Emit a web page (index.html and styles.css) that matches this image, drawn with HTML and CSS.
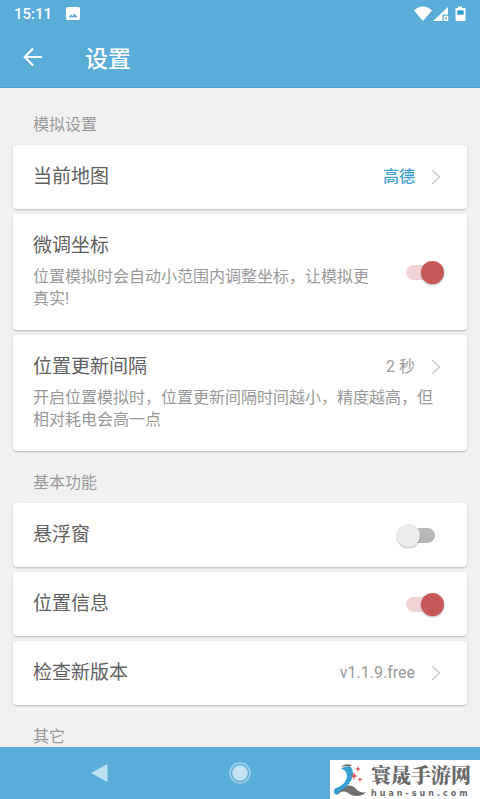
FILE: index.html
```html
<!DOCTYPE html>
<html lang="zh-CN">
<head>
<meta charset="utf-8">
<meta name="viewport" content="width=device-width, initial-scale=1">
<title>设置</title>
<link rel="stylesheet" href="styles.css">
</head>
<body>
<header class="top">
  <div class="status">
    <span class="clock">15:11</span>
    <svg class="photo" width="14" height="13" viewBox="0 0 14 13" aria-hidden="true"><path fill="#fff" fill-rule="evenodd" d="M1.500 0h11A1.500 1.500 0 0 1 14 1.500v10a1.500 1.500 0 0 1-1.500 1.500h-11A1.500 1.500 0 0 1 0 11.500v-10A1.500 1.500 0 0 1 1.500 0zM2.500 10.200h9L8.700 6.500 6.700 9 5.200 7.400z"/></svg>
    <svg class="signals" width="53" height="16" viewBox="0 0 53 16" aria-hidden="true">
      <path fill="#fff" d="M0 4.500C5-.8 13-.8 18 4.500L9 15z"/>
      <path fill="#fff" d="M34 1v7.500h-5.500V15H19z"/>
      <path fill="none" stroke="#fff" stroke-width="1.500" d="M33.500 10.500h-3v3.700h3z"/>
      <path fill="#fff" fill-rule="evenodd" d="M44 .5h4V2h2.500q1 0 1 1v11q0 1-1 1h-8q-1 0-1-1V3q0-1 1-1H44zM43.500 4.500v4h6v-4z"/>
      <path fill="#2f9bd0" d="M43.500 4.500h6v4h-6z"/>
    </svg>
  </div>
  <div class="toolbar">
    <button class="back" type="button" aria-label="返回">
      <svg width="20" height="20" viewBox="0 0 20 20" aria-hidden="true"><path fill="none" stroke="#fff" stroke-width="2.200" d="M19 10H2M10 1.500 1.800 10l8.200 8.500"/></svg>
    </button>
    <h1>设置</h1>
  </div>
</header>

<main class="content">
  <section class="group">
    <h2>模拟设置</h2>
    <div class="cards">
      <a class="card" href="#map">
        <span class="row"><span class="title">当前地图</span><span class="value accent">高德</span>
        <svg class="chevron" width="10" height="16" viewBox="0 0 10 16" aria-hidden="true"><path d="M1 1l7.500 7L1 15"/></svg></span>
      </a>
      <label class="card switch-card">
        <span class="text"><span class="title">微调坐标</span><span class="desc">位置模拟时会自动小范围内调整坐标，让模拟更真实!</span></span>
        <input class="switch" type="checkbox" checked>
      </label>
      <a class="card" href="#interval">
        <span class="row"><span class="title">位置更新间隔</span><span class="value">2 秒</span>
        <svg class="chevron" width="10" height="16" viewBox="0 0 10 16" aria-hidden="true"><path d="M1 1l7.500 7L1 15"/></svg></span>
        <span class="desc">开启位置模拟时，位置更新间隔时间越小，精度越高，但相对耗电会高一点</span>
      </a>
    </div>
  </section>
  <section class="group">
    <h2>基本功能</h2>
    <div class="cards">
      <label class="card switch-card"><span class="title">悬浮窗</span><input class="switch" type="checkbox"></label>
      <label class="card switch-card"><span class="title">位置信息</span><input class="switch" type="checkbox" checked></label>
      <a class="card" href="#update">
        <span class="row"><span class="title">检查新版本</span><span class="value">v1.1.9.free</span>
        <svg class="chevron" width="10" height="16" viewBox="0 0 10 16" aria-hidden="true"><path d="M1 1l7.500 7L1 15"/></svg></span>
      </a>
    </div>
  </section>
  <section class="group">
    <h2>其它</h2>
  </section>
</main>

<nav class="navbar">
  <button type="button" aria-label="后退"><svg width="18" height="20" viewBox="0 0 18 20" aria-hidden="true"><path fill="#bfe0f1" d="M16.500 1v18L0 10z"/></svg></button>
  <button type="button" aria-label="主屏幕"><svg width="22" height="22" viewBox="0 0 22 22" aria-hidden="true"><circle cx="11" cy="11" r="10" fill="none" stroke="#a5d3ec" stroke-width="1.500"/><circle cx="11" cy="11" r="7.800" fill="#c3e2f2"/></svg></button>
  <span></span>
</nav>
<div class="brand">
  <svg width="34" height="34" viewBox="0 0 34 34" aria-hidden="true">
    <path fill="#6f6f6f" d="M10 25c5-4 10-3 13 1 3 3 6 4 10 3-4 5-13 5-18 1-4-2-7-2-9 1H2c2-3 5-5 8-6z"/>
    <path fill="#35a0d4" d="M8 6c4-3 9-4 11 0 3 6-1 14-7 19-4 2-7 4-8 7-4-1-4-5-1-7 6-2 10-6 11-11 0-4-1-7-6-8z"/>
    <path fill="#6f6f6f" d="M9 3q4-3 10-1l-3 1.500q-4-1-7 .5z"/>
    <path fill="#d9534f" d="M25 3l.8 2.200L28 6l-2.200.8L25 9l-.8-2.200L22 6l2.200-.8zM21 9l1 3 3 1-3 1-1 3-1-3-3-1 3-1zM27 14l.7 1.800 1.800.7-1.800.7L27 19l-.7-1.800-1.800-.7 1.800-.7z"/>
  </svg>
  <div class="brand-text"><strong>寰晟手游网</strong><span>huan-sun.com</span></div>
</div>
</body>
</html>
```
FILE: styles.css
```css
* { box-sizing: border-box; }

body {
  margin: 0;
  height: 100vh;
  display: flex;
  flex-direction: column;
  overflow: hidden;
  background: #f1f1f1;
  color: #606060;
  font-family: Roboto, "Noto Sans CJK SC", sans-serif;
  font-size: 16px;
}

button { padding: 0; border: 0; background: none; }
svg { display: block; flex: none; }

.top { flex: none; background: #5aacd9; color: #fff; border-bottom: 1px solid #489fcf; }
.status { display: flex; align-items: center; height: 27px; padding: 0 13px 0 14px; }
.clock { font-size: 15px; font-weight: 500; }
.photo { margin-left: 14px; }
.signals { margin-left: auto; }
.toolbar { display: flex; align-items: center; height: 60px; padding: 0 23px; gap: 42px; }
h1 { margin: 0; font-size: 23px; font-weight: 500; line-height: normal; }

.content { flex: 1; min-height: 0; overflow-y: auto; scrollbar-width: none; padding: 5px 13px 0; }
h2 { margin: 0; padding: 20px 20px 8px; font-size: 16px; font-weight: 400; line-height: 24px; color: #999; }
.cards { display: flex; flex-direction: column; gap: 5px; }
.card {
  display: flex;
  flex-direction: column;
  gap: 8px;
  padding: 20px 23px 20px 20px;
  border-radius: 4px;
  background: #fff;
  box-shadow: 0 1px 2px rgba(0, 0, 0, .22);
  color: inherit;
  text-decoration: none;
}
.row { display: flex; align-items: center; }
.title { font-size: 19px; line-height: 24px; }
.value { margin-left: auto; margin-right: 16px; line-height: 24px; color: #999; }
.accent { color: #3d9fd0; font-weight: 500; }
.chevron { margin-right: 3px; fill: none; stroke: #ccc; stroke-width: 1.5; }
.desc { line-height: 22px; color: #999; }
.text { display: flex; flex-direction: column; gap: 8px; flex: 1; }

.switch-card { flex-direction: row; align-items: center; justify-content: space-between; gap: 14px; }
.switch {
  appearance: none;
  position: relative;
  flex: none;
  width: 47px;
  height: 23px;
  margin: 0;
}
.switch::before {
  content: "";
  position: absolute;
  inset: 4px 9px;
  border-radius: 8px;
  background: #b8b8b8;
}
.switch::after {
  content: "";
  position: absolute;
  left: 0;
  top: 0;
  width: 23px;
  height: 23px;
  border-radius: 50%;
  background: #ebebeb;
  box-shadow: 0 1px 2px rgba(0, 0, 0, .3);
}
.switch:checked::before { background: #f1d3d5; }
.switch:checked::after { left: auto; right: 0; background: #c85858; }

.navbar {
  flex: none;
  display: grid;
  grid-template-columns: repeat(3, 140px);
  justify-content: center;
  align-items: center;
  height: 52px;
  background: #5aacd9;
}
.navbar button { display: flex; justify-content: center; }

.brand {
  position: absolute;
  right: 0;
  bottom: 0;
  display: flex;
  align-items: center;
  gap: 4px;
  width: 150px;
  height: 39px;
  padding-left: 3px;
  background: #fff;
  color: #6a6a6a;
}
.brand-text { display: flex; flex-direction: column; flex: 1; }
.brand strong { font-family: "Noto Serif CJK SC", "Noto Sans CJK SC", serif; font-size: 20px; font-weight: 900; line-height: 28px; }
.brand-text span { font-family: "DejaVu Sans", sans-serif; font-size: 8px; font-weight: 700; line-height: 10px; letter-spacing: 3px; }
```
